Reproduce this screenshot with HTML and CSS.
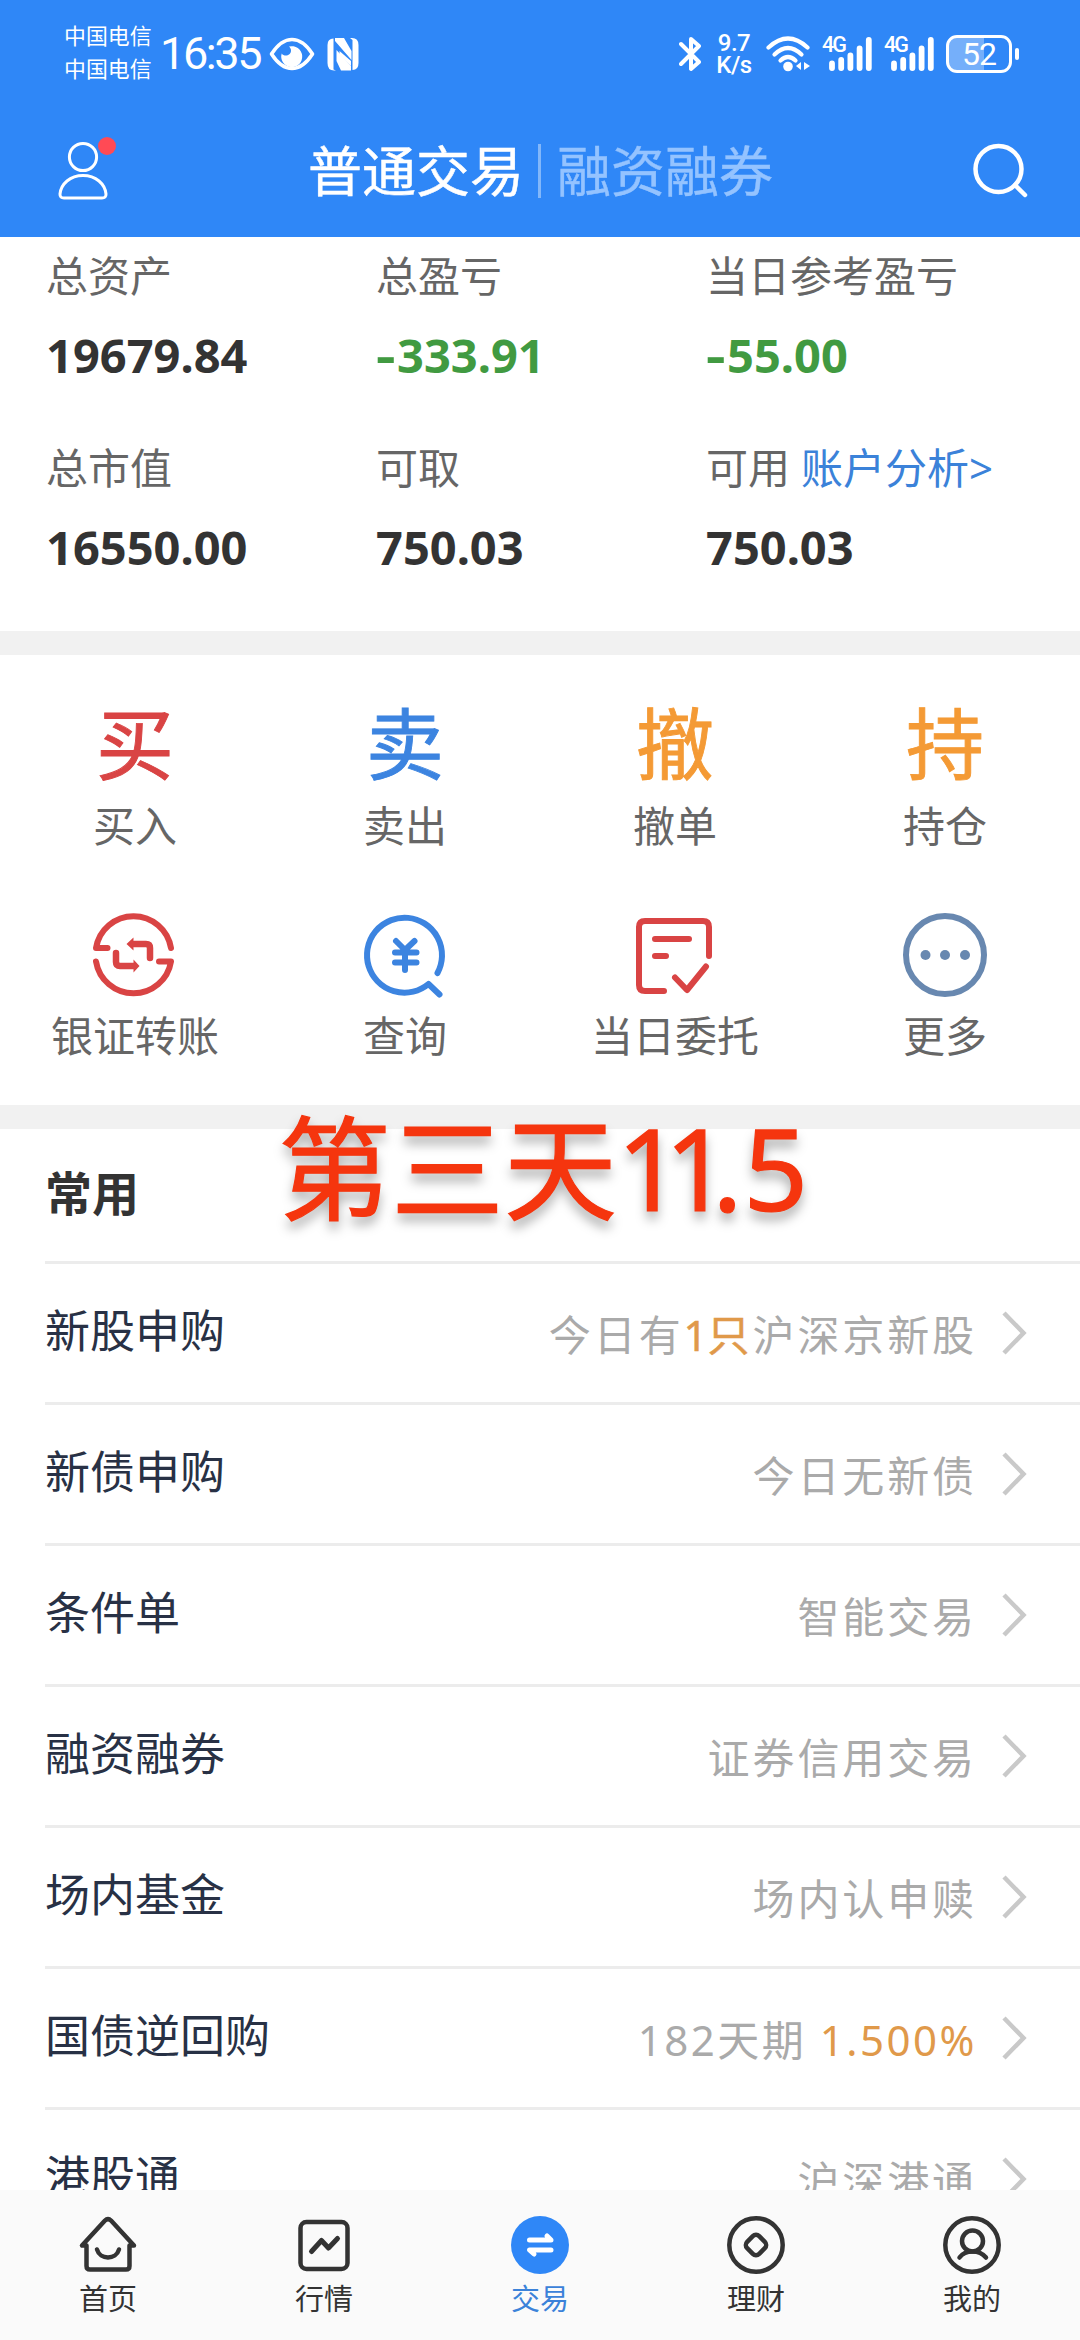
FILE: index.html
```html
<!DOCTYPE html>
<html lang="zh-CN">
<head>
<meta charset="utf-8">
<title>普通交易</title>
<link rel="stylesheet" href="styles.css">
</head>
<body>
<div class="app">
  <header class="top">
    <div class="status">
      <div class="carriers"><span>中国电信</span><span>中国电信</span></div>
      <span class="clock">16:35</span>
      <svg class="eye" width="46" height="34" viewBox="0 0 46 34"><path d="M2.500 17C9 7 16 2.500 23 2.500S37 7 43.500 17C37 27 30 31.500 23 31.500S9 27 2.500 17Z" fill="none" stroke="#fff" stroke-width="3.600" stroke-linejoin="round"/><path d="M20 9.500A10.500 10.500 0 1 1 12.700 16.500C15 20 22 19 22 13.500C22 11.500 21 10.500 20 9.500Z" fill="#fff"/></svg>
      <svg class="nfc" width="32" height="34" viewBox="0 0 32 34"><path d="M6.500 1.500V32.500Q9 33.500 9 33.500H7Q0.500 33.500 0.500 26V8Q0.500 1.500 6.500 1.500ZM8 1H17L24.500 14V23L8 4ZM23 1H25Q31.500 1 31.500 8V26Q31.500 33 25.500 33V3ZM9.500 13L24 29V33.500H14L9.500 24Z" fill="#fff"/><path d="M12.500 14V18L24 29V24Z" fill="#fff"/></svg>
      <div class="status-right">
        <svg class="bt" width="22" height="36" viewBox="0 0 22 36"><path d="M2 8L20 26L12 33V3L20 10L2 28" fill="none" stroke="#fff" stroke-width="4" stroke-linejoin="round" stroke-linecap="round"/></svg>
        <div class="speed"><span>9.7</span><span>K/s</span></div>
        <svg class="wifi" width="44" height="36" viewBox="0 0 44 36"><g fill="none" stroke="#fff" stroke-width="4.200" stroke-linecap="round"><path d="M2.500 11.500Q22-6.500 41.500 11.500"/><path d="M8.500 18.500Q22 5.500 35.500 18.500"/><path d="M14.500 24.500Q22 17.500 29.500 24.500"/></g><circle cx="22" cy="30.500" r="4.800" fill="#fff"/><path d="M35 26V34L30 30ZM38 26L44 30L38 34Z" fill="#fff"/></svg>
        <div class="cell"><span>4G</span><svg width="50" height="36" viewBox="0 0 50 36"><path d="M10 27.500V32M19.200 24V32M28.400 19.500V32M37.600 12.500V32M46.800 4V32" stroke="#fff" stroke-width="5.800" stroke-linecap="round"/></svg></div>
        <div class="cell second"><span>4G</span><svg width="50" height="36" viewBox="0 0 50 36"><path d="M10 27.500V32M19.200 24V32M28.400 19.500V32M37.600 12.500V32M46.800 4V32" stroke="#fff" stroke-width="5.800" stroke-linecap="round"/></svg></div>
        <div class="battery"><span>52</span></div><i class="tip"></i>
      </div>
    </div>
    <div class="titlebar">
      <svg class="user" width="66" height="68" viewBox="0 0 66 68"><g fill="none" stroke="#fff" stroke-width="3"><circle cx="28" cy="23" r="13.600"/><path d="M28 41.500C41 41.500 50 50 51 60Q51.200 64 47 64H9Q4.800 64 5 60C6 50 15 41.500 28 41.500Z"/></g><circle cx="52" cy="12" r="9" fill="#ff4a55"/></svg>
      <div class="tabs"><span class="tab-on">普通交易</span><i></i><span class="tab-off">融资融券</span></div>
      <svg class="search" width="56" height="56" viewBox="0 0 56 56"><g fill="none" stroke="#fff" stroke-width="4.500" stroke-linecap="round"><circle cx="26.500" cy="26" r="23"/><path d="M43 42L53 52"/></g></svg>
    </div>
  </header>

  <section class="summary">
    <div><span class="label">总资产</span><span class="value">19679.84</span></div>
    <div><span class="label">总盈亏</span><span class="value down"><span class="minus">-</span>333.91</span></div>
    <div><span class="label">当日参考盈亏</span><span class="value down"><span class="minus">-</span>55.00</span></div>
    <div><span class="label">总市值</span><span class="value">16550.00</span></div>
    <div><span class="label">可取</span><span class="value">750.03</span></div>
    <div><span class="label">可用 <a>账户分析&gt;</a></span><span class="value">750.03</span></div>
  </section>

  <section class="actions">
    <div><b class="glyph red">买</b><span>买入</span></div>
    <div><b class="glyph blue">卖</b><span>卖出</span></div>
    <div><b class="glyph orange">撤</b><span>撤单</span></div>
    <div><b class="glyph orange">持</b><span>持仓</span></div>
    <div><svg width="90" height="90" viewBox="0 0 90 90"><g fill="none" stroke="#d94444" stroke-width="6" stroke-linecap="round" stroke-linejoin="round"><path d="M17.500 38H6A38 38 0 0 1 81 38M69 51.500H81A38 38 0 0 1 6 51.500"/><path d="M44 34H56Q60 34 60 38V48M26 43V52Q26 56 30 56H44" stroke-width="6.500"/></g><path d="M36.500 34L43.500 27.500V40.500ZM49.500 56L43.500 49.500V62.500Z" fill="#d94444"/></svg><span>银证转账</span></div>
    <div><svg width="90" height="90" viewBox="0 0 90 90"><g fill="none" stroke="#3c84e0" stroke-width="6" stroke-linecap="round" stroke-linejoin="round"><path d="M77.500 63A37.500 37.500 0 1 0 68.500 74L79.500 84.500"/><path d="M36 31L45 40L54.500 31M45 40V60M35 42.500H56.500M35 52.500H56.500"/></g></svg><span>查询</span></div>
    <div><svg width="90" height="90" viewBox="0 0 90 90"><g fill="none" stroke="#d94444" stroke-width="6" stroke-linecap="round" stroke-linejoin="round"><path d="M34 81H15Q9 81 9 75V17Q9 11 15 11H73Q79 11 79 17V46"/><path d="M25 29H59M25 46H36"/><path d="M45 67.500L57 80L76 56.500"/></g></svg><span>当日委托</span></div>
    <div><svg width="90" height="90" viewBox="0 0 90 90"><circle cx="45" cy="45" r="39" fill="none" stroke="#6888b0" stroke-width="6"/><g fill="#6888b0"><circle cx="25.500" cy="45" r="5"/><circle cx="45" cy="45" r="5"/><circle cx="65" cy="45" r="5"/></g></svg><span>更多</span></div>
  </section>

  <section class="common">
    <h2>常用</h2>
    <div class="caption">第三天<span class="one">1</span><span class="one">1</span><span class="dot">.</span>5</div>
    <div class="row"><span class="name">新股申购</span><span class="note">今日有<em class="strong"><span class="narrow">1</span>只</em>沪深京新股</span><svg width="26" height="44" viewBox="0 0 26 44"><path d="M3 2L22.500 22L3 42"/></svg></div>
    <div class="row"><span class="name">新债申购</span><span class="note">今日无新债</span><svg width="26" height="44" viewBox="0 0 26 44"><path d="M3 2L22.500 22L3 42"/></svg></div>
    <div class="row"><span class="name">条件单</span><span class="note">智能交易</span><svg width="26" height="44" viewBox="0 0 26 44"><path d="M3 2L22.500 22L3 42"/></svg></div>
    <div class="row"><span class="name">融资融券</span><span class="note">证券信用交易</span><svg width="26" height="44" viewBox="0 0 26 44"><path d="M3 2L22.500 22L3 42"/></svg></div>
    <div class="row"><span class="name">场内基金</span><span class="note">场内认申赎</span><svg width="26" height="44" viewBox="0 0 26 44"><path d="M3 2L22.500 22L3 42"/></svg></div>
    <div class="row"><span class="name">国债逆回购</span><span class="note rate">182天期 <em>1.500%</em></span><svg width="26" height="44" viewBox="0 0 26 44"><path d="M3 2L22.500 22L3 42"/></svg></div>
    <div class="row"><span class="name">港股通</span><span class="note">沪深港通</span><svg width="26" height="44" viewBox="0 0 26 44"><path d="M3 2L22.500 22L3 42"/></svg></div>
  </section>

  <nav class="nav">
    <div><svg width="60" height="60" viewBox="0 0 60 60"><g fill="none" stroke="#333" stroke-width="4.500" stroke-linecap="round" stroke-linejoin="round"><path d="M4 30.500H8.500V51Q8.500 54.500 12 54.500H48Q51.500 54.500 51.500 51V30.500H56L33 5.500Q30 2.500 27 5.500Z"/><path d="M19 34.500C22 45 38 45 41 34.500"/></g></svg><span>首页</span></div>
    <div><svg width="60" height="60" viewBox="0 0 60 60"><g fill="none" stroke="#333" stroke-width="4.500" stroke-linecap="round" stroke-linejoin="round"><rect x="6.500" y="7" width="47" height="47" rx="6"/><path d="M17.500 36.500L27.500 25.500L34.500 33L43.500 23.500" stroke-width="5"/></g></svg><span>行情</span></div>
    <div class="active"><svg width="60" height="60" viewBox="0 0 60 60"><circle cx="30" cy="30" r="29" fill="#2f87f7"/><g fill="none" stroke="#fff" stroke-width="5" stroke-linecap="round" stroke-linejoin="round"><path d="M19.500 25H41L37 21M41 35H19.500L24 39"/></g></svg><span>交易</span></div>
    <div><svg width="60" height="60" viewBox="0 0 60 60"><g fill="none" stroke="#333" stroke-width="4.500"><circle cx="30" cy="30" r="26.700"/><rect x="21.500" y="21.500" width="17" height="17" rx="4.500" transform="rotate(45 30 30)"/></g></svg><span>理财</span></div>
    <div><svg width="60" height="60" viewBox="0 0 60 60"><g fill="none" stroke="#333" stroke-width="4.500" stroke-linecap="round"><circle cx="30" cy="30" r="26.700"/><circle cx="30.500" cy="26" r="10.500"/><path d="M17.500 42.500Q22 36.500 30.500 36.500T44 42.500"/></g></svg><span>我的</span></div>
  </nav>
</div>
</body>
</html>
```
FILE: styles.css
```css
* { box-sizing: border-box; }
body { margin: 0; background: #fff; font-family: "Noto Sans", "Noto Sans CJK SC", sans-serif; }
svg { display: block; flex: none; }
.app { width: 1080px; height: 2340px; overflow: hidden; display: flex; flex-direction: column; background: #fff; }

.top { height: 237px; background: #2f87f7; color: #fff; flex: none; }
.status { height: 107px; display: flex; align-items: center; padding-left: 64px; }
.carriers { display: flex; flex-direction: column; font-size: 21.900px; line-height: 33px; width: 96px; margin-top: -3px; white-space: nowrap; }
.clock { font-family: Roboto, sans-serif; font-size: 45px; letter-spacing: -2.400px; line-height: 54px; width: 109px; padding-top: 1px; white-space: nowrap; }
.nfc { margin-left: 12px; }
.status-right { display: flex; align-items: center; margin-left: 320px; }
.speed { display: flex; flex-direction: column; align-items: center; width: 36px; margin: 0 14px 0 15px; font-family: Roboto, sans-serif; font-size: 24px; line-height: 22px; font-weight: 500; white-space: nowrap; letter-spacing: -0.500px; }
.cell { position: relative; width: 50px; margin-left: 12px; }
.cell span { position: absolute; left: 0; top: -1px; font-family: Roboto, sans-serif; font-size: 21.500px; line-height: 20px; font-weight: 500; letter-spacing: -2px; }
.battery { width: 66px; height: 38px; margin-left: 12px; border: 3px solid #fff; border-radius: 11px; display: flex; align-items: center; justify-content: center; font-family: Roboto, sans-serif; font-size: 32px; line-height: 32px; font-weight: 400; letter-spacing: -1px; background: linear-gradient(90deg, #75affa 58%, transparent 58%); }
.tip { width: 4px; height: 12px; margin-left: 3px; border-radius: 2px; background: #fff; }

.titlebar { height: 130px; display: flex; align-items: center; padding: 0 0 3px 55px; }
.user { margin-top: -6px; }
.tabs { display: flex; align-items: center; margin-left: 187px; font-size: 54px; line-height: 70px; width: 664px; white-space: nowrap; }
.tabs i { width: 3px; height: 54px; margin: 0 16px 0 14px; background: #82b7fa; }
.tab-on { width: 216px; -webkit-text-stroke: .5px #fff; }
.tab-off { color: #94c3ff; -webkit-text-stroke: .4px #94c3ff; }

.summary { height: 394px; flex: none; display: grid; grid-template-columns: 330px 330px 1fr; grid-auto-rows: 192px; padding: 9px 0 0 46px; }
.summary > div { display: flex; flex-direction: column; white-space: nowrap; }
.label { font-size: 42px; line-height: 60px; color: #666; }
.label a { color: #3b82d9; }
.value { font-size: 47px; line-height: 60px; margin-top: 19px; font-weight: 700; color: #333; }
.down { color: #419a41; }
.minus { display: inline-block; transform: scaleX(1.3); transform-origin: left; letter-spacing: 6px; }

.actions { height: 498px; flex: none; display: grid; grid-template-columns: repeat(4, 270px); grid-auto-rows: 210px; border: solid #f1f1f1; border-width: 24px 0; padding-top: 46px; }
.actions > div { display: flex; flex-direction: column; align-items: center; font-size: 42px; line-height: 60px; color: #666; }
.actions span { margin-top: 5px; }
.actions svg { margin-top: -1px; margin-bottom: 1px; }
.glyph { height: 90px; font-size: 78px; line-height: 87px; font-weight: 400; -webkit-text-stroke: .9px currentColor; }
.red { color: #d94444; }
.blue { color: #3c84e0; }
.orange { color: #f49a35; }

.common { position: relative; flex: 1; min-height: 0; overflow: visible; padding-left: 45px; display: flex; flex-direction: column; }
.common h2 { margin: 0; height: 132px; flex: none; font-size: 47px; line-height: 128px; font-weight: 700; color: #333; }
.caption { position: absolute; left: 278px; top: -37px; font-size: 113px; line-height: 150px; font-weight: 400; -webkit-text-stroke: 1.200px #f5350e; color: #f5350e; white-space: nowrap; text-shadow: 0 8px 12px rgba(0, 0, 0, .35); }
.one { letter-spacing: -17px; }
.dot { letter-spacing: 1px; }
.row { height: 141px; flex: none; border-top: 3px solid #ececec; display: flex; align-items: center; padding-right: 53px; }
.name { font-size: 45px; line-height: 60px; color: #283145; margin-top: -4px; }
.note { margin-left: auto; margin-right: 24px; font-size: 42px; line-height: 60px; letter-spacing: 2.900px; color: #aaa; margin-top: 4px; }
.note em { font-style: normal; color: #e0994a; }
.note .strong { -webkit-text-stroke: .5px #e0994a; }
.narrow { letter-spacing: 0; }
.rate { letter-spacing: 2.500px; }
.row path { fill: none; stroke: #c9c9c9; stroke-width: 4.500px; }

.nav { position: relative; height: 150px; flex: none; background: #fafafa; display: grid; grid-template-columns: repeat(5, 216px); padding-top: 25px; }
.nav > div { display: flex; flex-direction: column; align-items: center; font-size: 29px; line-height: 40px; color: #333; }
.nav span { margin-top: 4px; }
.nav .active { color: #3b82d9; }
```
